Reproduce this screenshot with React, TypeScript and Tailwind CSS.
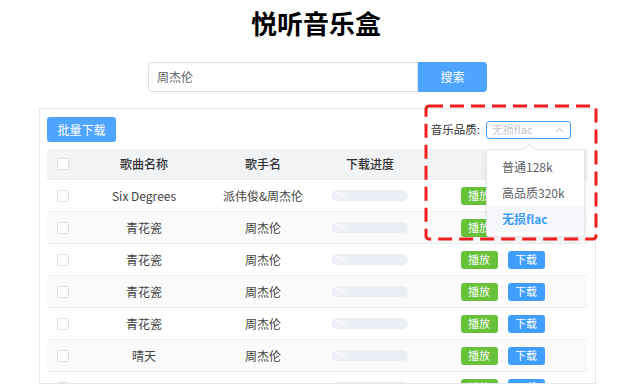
import React from "react";

const rows = [
  { name: "Six Degrees", singer: "派伟俊&周杰伦" },
  { name: "青花瓷", singer: "周杰伦" },
  { name: "青花瓷", singer: "周杰伦" },
  { name: "青花瓷", singer: "周杰伦" },
  { name: "青花瓷", singer: "周杰伦" },
  { name: "晴天", singer: "周杰伦" },
  { name: "", singer: "" },
];

function Box() {
  return <div className="w-[12px] h-[12px] border border-[#dcdfe6] rounded-[2px] bg-white" />;
}

export default function App() {
  return (
    <div
      className="relative w-[628px] h-[387px] bg-white overflow-hidden"
      style={{ fontFamily: '"Noto Sans CJK SC", "Noto Sans", sans-serif' }}
    >
      <h1 className="pt-[8px] pl-[4px] text-center text-[26px] leading-[30px] font-bold text-black">
        悦听音乐盒
      </h1>

      <div className="mt-[24px] pl-[148px] flex">
        <div className="w-[270px] h-[30px] border border-[#dcdfe6] rounded-l-[4px] flex items-center pl-[8px] text-[12px] text-[#606266]">
          周杰伦
        </div>
        <div className="w-[69px] h-[30px] bg-[#4ea5ff] rounded-r-[4px] flex items-center justify-center text-[12px] text-white">
          搜索
        </div>
      </div>

      <div className="relative mt-[16px] ml-[39px] w-[557px] h-[276px] border border-[#e4e7ed] overflow-hidden pt-[8px] px-[7px]">
        <div className="flex items-center justify-between h-[25px]">
          <div className="w-[69px] h-[25px] bg-[#4ea5ff] rounded-[3px] flex items-center justify-center text-[12px] text-white">
            批量下载
          </div>
          <div className="flex items-center mr-[17px]">
            <span className="text-[11.5px] text-[#303133] mr-[6px]">音乐品质:</span>
            <div className="w-[85px] h-[18px] border border-[#409eff] rounded-[3px] flex items-center justify-between pl-[5px] pr-[6px]">
              <span className="text-[11px] text-[#c0c4cc] leading-none">无损flac</span>
              <svg width="9" height="6" viewBox="0 0 9 6">
                <polyline points="1,5 4.5,1.5 8,5" fill="none" stroke="#b0b3b8" strokeWidth="1" />
              </svg>
            </div>
          </div>
        </div>

        <div className="mt-[7px] w-[540px]">
          <div className="flex h-[31px] items-center bg-[#f2f3f5] text-[12px] font-medium text-[#303133] border-b border-[#ebeef5]">
            <div className="w-[37px] pl-[10px]"><Box /></div>
            <div className="w-[120px] text-center">歌曲名称</div>
            <div className="w-[118px] text-center">歌手名</div>
            <div className="w-[96px] text-center">下载进度</div>
            <div className="w-[169px] text-center">操作</div>
          </div>
          {rows.map((r, i) => (
            <div
              key={i}
              className={
                "flex h-[32px] items-center text-[12px] text-[#444] border-b border-[#ebeef5] " +
                (i % 2 === 1 ? "bg-[#fafafa]" : "bg-white")
              }
            >
              <div className="w-[37px] pl-[10px]"><Box /></div>
              <div className="w-[120px] text-center">{r.name}</div>
              <div className="w-[118px] text-center">{r.singer}</div>
              <div className="w-[96px] px-[10px]">
                <div className="h-[11px] rounded-full bg-[#ebeef5] flex items-center pl-[3px] text-[9px] leading-none text-white">
                  0%
                </div>
              </div>
              <div className="w-[169px] flex justify-center gap-[10px]">
                <div className="w-[37px] h-[18px] bg-[#67c23a] rounded-[3px] flex items-center justify-center text-[11px] text-white">
                  播放
                </div>
                <div className="w-[37px] h-[18px] bg-[#409eff] rounded-[3px] flex items-center justify-center text-[11px] text-white">
                  下载
                </div>
              </div>
            </div>
          ))}
        </div>

        <div className="absolute left-[446px] top-[40px] w-[99px] bg-white border border-[#e4e7ed] rounded-[3px] shadow-[0_2px_10px_rgba(0,0,0,0.08)] py-[4px]">
          <div className="absolute -top-[5px] left-[38px] w-[8px] h-[8px] bg-white border-l border-t border-[#e4e7ed] rotate-45" />
          <div className="h-[26px] flex items-center pl-[15px] text-[12px] text-[#606266]">普通128k</div>
          <div className="h-[26px] flex items-center pl-[15px] text-[12px] text-[#606266]">高品质320k</div>
          <div className="h-[26px] flex items-center pl-[15px] text-[12px] font-bold text-[#409eff] bg-[#f5f7fa]">无损flac</div>
        </div>
      </div>

      <svg className="absolute left-[424px] top-[104px]" width="174" height="137" viewBox="0 0 174 137">
        <rect x="2" y="2" width="170" height="133" rx="3" fill="none" stroke="#f01e1e" strokeWidth="3" strokeDasharray="14 7" />
      </svg>
    </div>
  );
}
